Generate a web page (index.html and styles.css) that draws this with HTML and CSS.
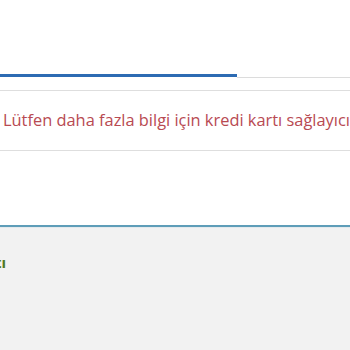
FILE: index.html
```html
<!DOCTYPE html>
<html>
<head>
<meta charset="utf-8">
<link rel="stylesheet" href="styles.css">
</head>
<body>
<div class="page">
  <div class="top"></div>
  <div class="progress">
    <div class="progress-fill"></div>
  </div>
  <div class="rule rule-a"></div>
  <div class="notice">Lütfen daha fazla bilgi için kredi kartı sağlayıcınızla iletişime geçin.</div>
  <div class="rule rule-b"></div>
  <div class="spacer"></div>
  <div class="footer">
    <div class="footer-label"><span class="label-text">Kredi Kartı</span></div>
  </div>
</div>
</body>
</html>
```
FILE: styles.css
```css
html, body {
  margin: 0;
  padding: 0;
  background: #ffffff;
  overflow: hidden;
}
.page {
  width: 350px;
  height: 350px;
  display: flex;
  flex-direction: column;
  overflow: hidden;
  font-family: "Open Sans", "Noto Sans", sans-serif;
}
.top {
  height: 74px;
}
.progress {
  height: 4px;
  display: flex;
  align-items: flex-end;
}
.progress::after {
  content: "";
  flex: 1;
  height: 1px;
  background: #dcdcdc;
}
.progress-fill {
  width: 237px;
  height: 3px;
  align-self: flex-start;
  background: #2d6bb3;
}
.rule {
  height: 1px;
  background: #dedede;
}
.rule-a {
  margin-top: 12px;
}
.notice {
  margin-top: 19px;
  padding-left: 3px;
  color: #b84a52;
  font-size: 16.4px;
  line-height: 20px;
  white-space: nowrap;
}
.rule-b {
  margin-top: 20px;
}
.spacer {
  height: 74px;
}
.footer {
  flex: 1;
  background: #f2f2f2;
  border-top: 2px solid #5e9db8;
  box-shadow: inset 0 1px 0 #e4eaed;
}
.footer-label {
  margin-top: 27px;
  width: 6px;
  display: flex;
  justify-content: flex-end;
  overflow: hidden;
}
.label-text {
  flex: none;
  white-space: nowrap;
  color: #4f7a1f;
  font-weight: 700;
  font-size: 15px;
  line-height: 16px;
}
```
